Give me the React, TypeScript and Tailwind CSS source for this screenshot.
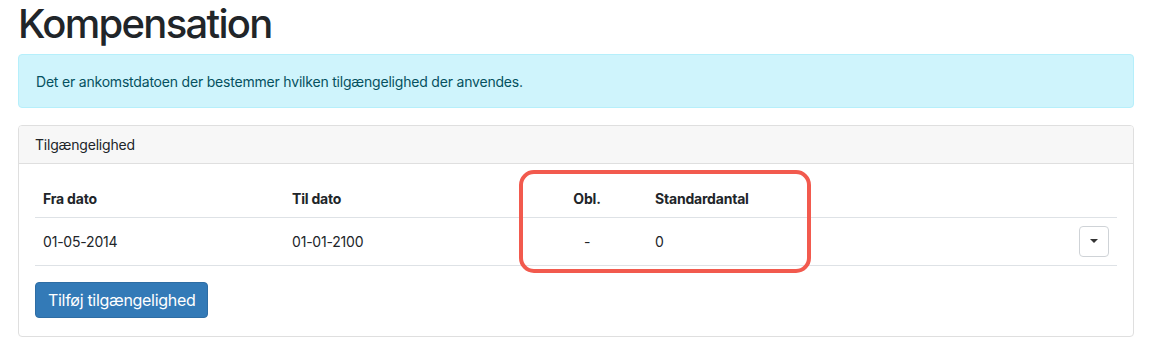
import React from "react";

const rows = [{ from: "01-05-2014", to: "01-01-2100", obl: "-", std: "0" }];

const App: React.FC = () => {
    return (
        <div className="w-[1150px] h-[350px] bg-white overflow-hidden font-['Inter','Liberation_Sans',sans-serif] text-[#212529]">
            <div className="px-[18px] pr-[16px]">
                <h1 className="text-[40px] leading-[48px] font-medium tracking-[-1.7px] mb-[6px]">
                    Kompensation
                </h1>

                <div className="h-[54px] flex items-center px-[17px] bg-[#cff4fc] border border-[#b6effb] rounded-[4px] text-[#055160] text-[14px] tracking-[-0.2px]">
                    Det er ankomstdatoen der bestemmer hvilken tilgængelighed der anvendes.
                </div>

                <div className="mt-[17px] border border-[#dfdfdf] rounded-[4px] overflow-hidden">
                    <div className="h-[38px] flex items-center px-[16px] bg-[#f7f7f7] border-b border-[#dfdfdf] text-[14px] tracking-[-0.2px]">
                        Tilgængelighed
                    </div>

                    <div className="px-[16px] pt-[16px] pb-[18px]">
                        <div className="relative">
                            <table className="w-full text-[14px] tracking-[-0.2px] border-collapse">
                                <thead>
                                    <tr className="border-b border-[#dee2e6] h-[37px]">
                                        <th className="w-[249px] text-left font-bold px-[8px]">Fra dato</th>
                                        <th className="w-[243px] text-left font-bold px-[8px]">Til dato</th>
                                        <th className="w-[120px] text-center font-bold px-[8px]">Obl.</th>
                                        <th className="text-left font-bold px-[8px]">Standardantal</th>
                                        <th className="w-[60px]"></th>
                                    </tr>
                                </thead>
                                <tbody>
                                    {rows.map((r, i) => (
                                        <tr key={i} className="border-b border-[#dee2e6] h-[48px]">
                                            <td className="px-[8px]">{r.from}</td>
                                            <td className="px-[8px]">{r.to}</td>
                                            <td className="px-[8px] text-center">{r.obl}</td>
                                            <td className="px-[8px]">{r.std}</td>
                                            <td className="px-[8px] text-right">
                                                <button className="inline-flex items-center justify-center w-[30px] h-[31px] border border-[#cfd3d7] rounded-[4px] bg-white align-middle">
                                                    <span className="block w-0 h-0 border-l-[4px] border-r-[4px] border-t-[4px] border-l-transparent border-r-transparent border-t-[#333]"></span>
                                                </button>
                                            </td>
                                        </tr>
                                    ))}
                                </tbody>
                            </table>

                            {/* annotation box around Obl. / Standardantal */}
                            <div className="absolute left-[484px] top-[-10px] w-[292px] h-[103px] border-[4px] border-[#f25a4e] rounded-[15px] pointer-events-none"></div>
                        </div>

                        <button className="mt-[16px] h-[36px] px-[12px] bg-[#337ab7] text-white text-[16px] tracking-[-0.3px] rounded-[4px] border border-[#2e6da4]">
                            Tilføj tilgængelighed
                        </button>
                    </div>
                </div>
            </div>
        </div>
    );
};

export default App;
